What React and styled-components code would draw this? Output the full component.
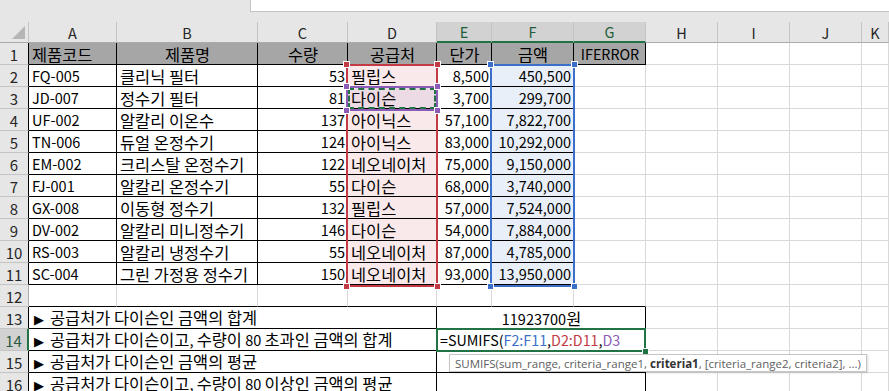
import React from "react"
import styled, { createGlobalStyle } from "styled-components"

const GRID = "#d9d9d9"
const HEAD_LINE = "#c4c4c4"
const BLACK = "#000"
const GREEN = "#217346"
const RED = "#c23b44"
const BLUE = "#3b6fc9"
const PURPLE = "#8d5cb8"

const GlobalStyle = createGlobalStyle`
  html, body {
    margin: 0;
    padding: 0;
    background: #e6e6e6;
    overflow: hidden;
  }
`

const rows = [
  ["FQ-005", "클리닉 필터", 53, "필립스", "8,500", "450,500"],
  ["JD-007", "정수기 필터", 81, "다이슨", "3,700", "299,700"],
  ["UF-002", "알칼리 이온수", 137, "아이닉스", "57,100", "7,822,700"],
  ["TN-006", "듀얼 온정수기", 124, "아이닉스", "83,000", "10,292,000"],
  ["EM-002", "크리스탈 온정수기", 122, "네오네이처", "75,000", "9,150,000"],
  ["FJ-001", "알칼리 온정수기", 55, "다이슨", "68,000", "3,740,000"],
  ["GX-008", "이동형 정수기", 132, "필립스", "57,000", "7,524,000"],
  ["DV-002", "알칼리 미니정수기", 146, "다이슨", "54,000", "7,884,000"],
  ["RS-003", "알칼리 냉정수기", 55, "네오네이처", "87,000", "4,785,000"],
  ["SC-004", "그린 가정용 정수기", 150, "네오네이처", "93,000", "13,950,000"],
]

const headers = [
  ["제품코드", "left"],
  ["제품명", "center"],
  ["수량", "center"],
  ["공급처", "center"],
  ["단가", "center"],
  ["금액", "center"],
  ["IFERROR", "center"],
]

const questions = [
  "공급처가 다이슨인 금액의 합계",
  "공급처가 다이슨이고, 수량이 80 초과인 금액의 합계",
  "공급처가 다이슨인 금액의 평균",
  "공급처가 다이슨이고, 수량이 80 이상인 금액의 평균",
]

const letters = ["A", "B", "C", "D", "E", "F", "G", "H", "I", "J", "K"]

const TopBar = styled.div`
  display: flex;
  height: 12px;
  margin-bottom: 10px;
`

const NameArea = styled.div`
  width: 250px;
`

const FormulaInput = styled.div`
  flex: 1;
  background: #fff;
  border-left: 1px solid ${HEAD_LINE};
  border-bottom: 1px solid ${HEAD_LINE};
`

const Sheet = styled.div`
  display: grid;
  grid-template-columns: 29px 88px 141px 90px 89px 55px 82px 72px 72px 72px 72px 1fr;
  grid-template-rows: 21px repeat(16, 22px);
  font-family: "Noto Sans CJK KR", "Noto Sans", sans-serif;
  font-size: 14.5px;
  color: #000;
  * {
    box-sizing: border-box;
  }
`

const Corner = styled.div`
  grid-column: 1;
  grid-row: 1;
  display: flex;
  align-items: flex-end;
  justify-content: flex-end;
  padding: 0 3px 3px 0;
  border-right: 1px solid ${HEAD_LINE};
  border-bottom: 1px solid #ababab;
`

const ColHead = styled.div`
  grid-column: ${(p) => p.$col};
  grid-row: 1;
  display: flex;
  align-items: center;
  justify-content: center;
  font-size: 14.5px;
  color: ${(p) => (p.$active ? "#1f5c3b" : "#262626")};
  background: ${(p) => (p.$active ? "#d2d2d2" : "#e6e6e6")};
  border-right: 1px solid ${HEAD_LINE};
  border-bottom: ${(p) => (p.$active ? `2px solid ${GREEN}` : "1px solid #ababab")};
`

const RowHead = styled.div`
  grid-column: 1;
  grid-row: ${(p) => p.$row};
  display: flex;
  align-items: center;
  justify-content: center;
  padding-top: 1px;
  font-size: 15px;
  color: ${(p) => (p.$active ? "#2a5a40" : "#262626")};
  background: ${(p) => (p.$active ? "#d2d2d2" : "#e6e6e6")};
  border-bottom: 1px solid ${HEAD_LINE};
  border-right: ${(p) => (p.$active ? `2px solid ${GREEN}` : `1px solid ${p.$edge || "#ababab"}`)};
`

const Cell = styled.div`
  grid-column: ${(p) => p.$col} / span ${(p) => p.$span || 1};
  grid-row: ${(p) => p.$row};
  display: flex;
  align-items: center;
  justify-content: ${(p) =>
    p.$align === "right" ? "flex-end" : p.$align === "center" ? "center" : "flex-start"};
  padding: 1px 2px 0 3px;
  white-space: nowrap;
  background: ${(p) => p.$bg || "#fff"};
  border-right: 1px solid ${(p) => p.$rb || GRID};
  border-bottom: 1px solid ${(p) => p.$bb || GRID};
`

const Text = styled.span`
  line-height: 20px;
`

const Hangul = styled.span`
  font-size: 16.4px;
`

const Arrow = styled.span`
  font-family: "DejaVu Sans", sans-serif;
  font-size: 13px;
  margin: 0 6px 0 2px;
`

const RangeBox = styled.div`
  grid-column: ${(p) => p.$col} / span ${(p) => p.$span || 1};
  grid-row: ${(p) => p.$row} / span ${(p) => p.$rows || 1};
  position: relative;
  z-index: ${(p) => p.$z || 2};
  margin: -1px -1px -2px -2px;
  border: 2px solid ${(p) => p.$color};
  pointer-events: none;
`

const Ants = styled.div`
  height: 100%;
  border: 2px dashed ${GREEN};
`

const Handle = styled.span`
  position: absolute;
  width: 5px;
  height: 5px;
  background: ${(p) => p.$color};
  box-shadow: 0 0 0 1px #fff;
  ${(p) => (p.$top ? "top: -4px;" : "bottom: -4px;")}
  ${(p) => (p.$left ? "left: -4px;" : "right: -4px;")}
`

const ActiveCell = styled.div`
  grid-column: 6 / span 3;
  grid-row: 15;
  position: relative;
  z-index: 3;
  margin: -1px 0 -1px -1px;
  border: 2px solid ${GREEN};
  pointer-events: none;
`

const FillHandle = styled.span`
  position: absolute;
  right: -4px;
  bottom: -4px;
  width: 5px;
  height: 5px;
  background: ${GREEN};
  box-shadow: 0 0 0 1px #fff;
`

const Formula = styled.span`
  font-size: 14.3px;
  line-height: 20px;
`

const Ref = styled.span`
  color: ${(p) => p.$color};
`

const Tooltip = styled.div`
  grid-column: 6 / span 7;
  grid-row: 16;
  justify-self: start;
  align-self: start;
  z-index: 5;
  margin: 3px 0 0 12px;
  height: 18px;
  display: flex;
  align-items: center;
  padding: 0 5px;
  background: #fff;
  border: 1px solid #c6c6c6;
  box-shadow: 1px 1px 2px rgba(0, 0, 0, 0.15);
  font-family: "Open Sans", "Noto Sans", sans-serif;
  font-size: 11.5px;
  color: #606060;
  white-space: nowrap;
  b {
    color: #333;
    font-weight: 700;
  }
`

const Handles = ({ color }) => (
  <>
    <Handle $color={color} $top $left />
    <Handle $color={color} $top />
    <Handle $color={color} $left />
    <Handle $color={color} />
  </>
)

// hangul runs get a bigger size so they match the width of the sheet's font
const kr = (value) =>
  String(value)
    .split(/([가-힣]+(?:\s+[가-힣]+)*)/)
    .filter(Boolean)
    .map((part, i) => (/[가-힣]/.test(part) ? <Hangul key={i}>{part}</Hangul> : part))

function buildCells() {
  const cells = []
  const blank = (row, from) => {
    for (let c = from; c <= 12; c++) {
      cells.push(<Cell key={`${row}-${c}`} $row={row} $col={c} />)
    }
  }

  // row 1: table header
  headers.forEach(([text, align], i) => {
    cells.push(
      <Cell key={`h${i}`} $row={2} $col={i + 2} $align={align} $bg="#a6a6a6" $rb={BLACK} $bb={BLACK}>
        <Text>{text === "IFERROR" ? <Formula>{text}</Formula> : kr(text)}</Text>
      </Cell>
    )
  })
  blank(2, 9)

  // rows 2-11: data
  rows.forEach((d, i) => {
    const r = i + 3
    const tint = [null, null, null, i === 1 ? "#ecdae4" : "#f9e9ea", null, "#e9eff9"]
    const align = ["left", "left", "right", "left", "right", "right"]
    d.forEach((v, c) => {
      cells.push(
        <Cell key={`${r}-${c}`} $row={r} $col={c + 2} $align={align[c]} $bg={tint[c]} $rb={BLACK} $bb={BLACK}>
          <Text>{kr(v)}</Text>
        </Cell>
      )
    })
    blank(r, 8)
  })

  // row 12: empty, closes the box below
  for (let c = 2; c <= 12; c++) {
    cells.push(<Cell key={`13-${c}`} $row={13} $col={c} $bb={c <= 8 ? BLACK : undefined} />)
  }

  // rows 13-16: questions
  questions.forEach((q, i) => {
    const r = i + 14
    cells.push(
      <Cell key={`q${i}`} $row={r} $col={2} $span={4} $rb={BLACK} $bb={BLACK}>
        <Text>
          <Arrow>▶</Arrow>
          {kr(q)}
        </Text>
      </Cell>
    )
    let answer = null
    if (i === 0) answer = <Text>{kr("11923700원")}</Text>
    if (i === 1)
      answer = (
        <Formula>
          =SUMIFS(<Ref $color={BLUE}>F2:F11</Ref>,<Ref $color={RED}>D2:D11</Ref>,
          <Ref $color={PURPLE}>D3</Ref>
        </Formula>
      )
    cells.push(
      <Cell key={`a${i}`} $row={r} $col={6} $span={3} $align={i === 0 ? "center" : "left"} $rb={BLACK} $bb={BLACK}>
        {answer}
      </Cell>
    )
    blank(r, 9)
  })
  return cells
}

export default function App() {
  return (
    <>
      <GlobalStyle />
      <TopBar>
        <NameArea />
        <FormulaInput />
      </TopBar>
      <Sheet>
        <Corner>
          <svg width="13" height="13" viewBox="0 0 13 13">
            <polygon points="13,0 13,13 0,13" fill="#b5b5b5" />
          </svg>
        </Corner>
        {letters.map((l, i) => (
          <ColHead key={l} $col={i + 2} $active={i >= 4 && i <= 6}>
            {l}
          </ColHead>
        ))}
        {Array.from({ length: 16 }, (_, i) => (
          <RowHead key={i} $row={i + 2} $active={i === 13} $edge={i === 11 ? undefined : BLACK}>
            {i + 1}
          </RowHead>
        ))}
        {buildCells()}

        <RangeBox $col={5} $row={3} $rows={10} $color={RED}>
          <Handles color={RED} />
        </RangeBox>
        <RangeBox $col={7} $row={3} $rows={10} $color={BLUE}>
          <Handles color={BLUE} />
        </RangeBox>
        <RangeBox $col={5} $row={4} $color={PURPLE} $z={3}>
          <Ants />
          <Handles color={PURPLE} />
        </RangeBox>
        <ActiveCell>
          <FillHandle />
        </ActiveCell>
        <Tooltip>
          SUMIFS(sum_range, criteria_range1,&nbsp;<b>criteria1</b>, [criteria_range2, criteria2], ...)
        </Tooltip>
      </Sheet>
    </>
  )
}
